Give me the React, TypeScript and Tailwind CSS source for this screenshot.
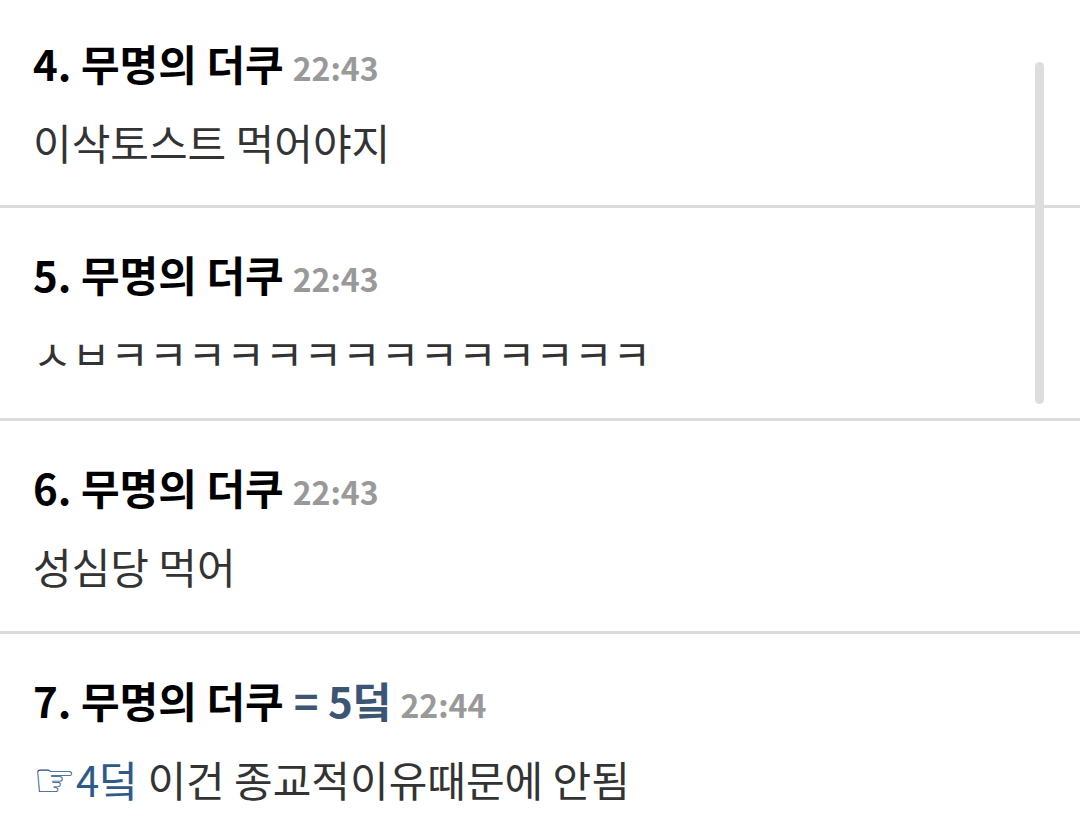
type Comment = {
  no: number;
  time: string;
  reply?: string;
  quote?: string;
  body: string;
};

const comments: Comment[] = [
  { no: 4, time: "22:43", body: "이삭토스트 먹어야지" },
  { no: 5, time: "22:43", body: "ㅅㅂㅋㅋㅋㅋㅋㅋㅋㅋㅋㅋㅋㅋㅋㅋ" },
  { no: 6, time: "22:43", body: "성심당 먹어" },
  { no: 7, time: "22:44", reply: "= 5덬", quote: "4덬", body: "이건 종교적이유때문에 안됨" },
];

function CommentItem({ c, first }: { c: Comment; first: boolean }) {
  return (
    <li
      className={
        first
          ? "h-[208px] border-b-[3px] border-[#dcdcdc] px-[33px] pt-[34px]"
          : "h-[213px] border-b-[3px] border-[#dcdcdc] px-[33px] pt-[37px]"
      }
    >
      <div className="text-[42px] leading-[57px] font-bold text-black whitespace-nowrap">
        <span>{c.no}. 무명의 더쿠</span>
        {c.reply && <span className="ml-[10px] text-[#3b5573]">{c.reply}</span>}
        <span className="ml-[9px] text-[32px] text-[#999999]">{c.time}</span>
      </div>
      <p className="mt-[17px] text-[42px] leading-[57px] text-[#333333] whitespace-nowrap">
        {c.quote && (
          <span className="text-[#2e5a88]">
            <span className="text-[48px] leading-none font-['DejaVu_Sans']">☞</span>
            {c.quote}{" "}
          </span>
        )}
        {c.body}
      </p>
    </li>
  );
}

export default function App() {
  return (
    <div className="relative w-[1080px] h-[824px] overflow-hidden bg-white font-['Noto_Sans_CJK_KR',sans-serif]">
      <ul>
        {comments.map((c, i) => (
          <CommentItem key={c.no} c={c} first={i === 0} />
        ))}
      </ul>
      {/* scrollbar thumb */}
      <div className="absolute left-[1035px] top-[62px] w-[9px] h-[342px] rounded-full bg-[#dddddd]" />
    </div>
  );
}
